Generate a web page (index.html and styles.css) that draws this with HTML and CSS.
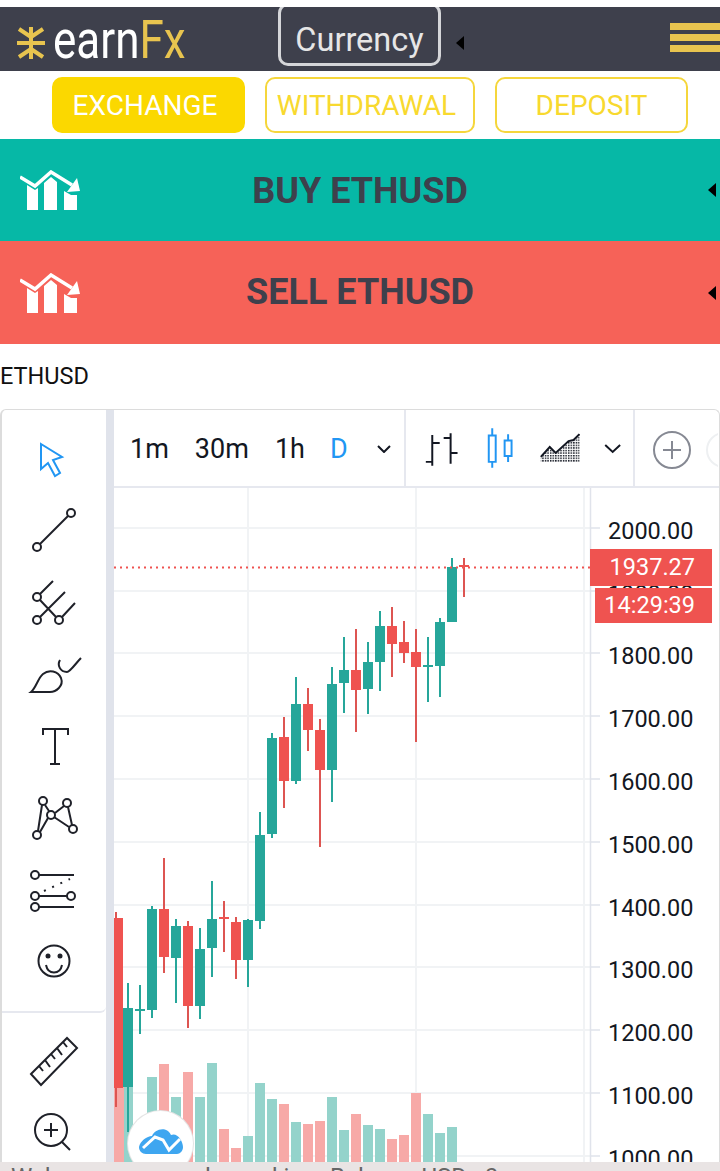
FILE: index.html
```html
<!DOCTYPE html>
<html lang="en">
<head>
    <meta charset="UTF-8">
    <meta name="viewport" content="width=device-width, initial-scale=1.0">
    <title>earnFx</title>
    <link rel="stylesheet" href="styles.css">
</head>
<body>

<header class="topbar">
    <div class="logo">
        <svg class="logo-mark" viewBox="17 27 28 32" width="28" height="32">
            <path d="M31 27V59M17 43H45M19 29L31 37L43 29M19 57L31 49L43 57"/>
        </svg>
        <span class="logo-text">earn<b>Fx</b></span>
    </div>
    <button class="currency">Currency</button>
    <span class="arrow-left arrow-currency"></span>
    <div class="burger"><i></i><i></i><i></i></div>
</header>

<nav class="tabs">
    <a class="tab tab-active">EXCHANGE</a>
    <a class="tab tab-wide">WITHDRAWAL</a>
    <a class="tab">DEPOSIT</a>
</nav>

<section class="trade trade-buy">
    <svg class="trade-icon" viewBox="0 0 60 40" width="60" height="40">
        <use href="#tradeGlyph"/>
    </svg>
    <h2>BUY ETHUSD</h2>
    <span class="arrow-left arrow-trade"></span>
</section>
<section class="trade trade-sell">
    <svg class="trade-icon" viewBox="0 0 60 40" width="60" height="40">
        <g id="tradeGlyph">
            <path class="glyph-fill" d="M7 15L15 20L18 18V40H7ZM24 13L31 7L37 12V40H24ZM44 21L51 25H57V40H44Z"/>
            <path class="glyph-line" d="M0 7L15 16L31 2L52 15"/>
            <path class="glyph-fill" d="M57 8L60 21L47 22Z"/>
        </g>
    </svg>
    <h2>SELL ETHUSD</h2>
    <span class="arrow-left arrow-trade"></span>
</section>

<div class="symbol">ETHUSD</div>

<div class="widget">
    <aside class="tools">
        <div class="tools-group">
            <svg class="tool tool-active" viewBox="2 423 104 72"><path d="M41 444L62 457L53 460L60 473L55 476L48 463L41 469Z"/></svg>
            <svg class="tool" viewBox="2 495 104 72"><circle cx="71" cy="513" r="4"/><circle cx="37" cy="547" r="4"/><path d="M68 516L40 544"/></svg>
            <svg class="tool" viewBox="2 567 104 72"><circle cx="37" cy="597" r="4"/><circle cx="37" cy="620" r="4"/><circle cx="59" cy="620" r="4"/><path d="M40 594L53 581M40 617L65 592M62 617L75 603M40 600L56 617"/></svg>
            <svg class="tool" viewBox="2 639 104 72"><path d="M31 692C36 688 38 678 43 674C49 669 58 671 61 678C64 686 56 692 50 692ZM60 660C57 665 60 672 67 672C70 672 76 663 81 658"/></svg>
            <svg class="tool" viewBox="2 711 104 72"><path d="M43 735V729H68V735M55 729V764M50 764H60"/></svg>
            <svg class="tool" viewBox="2 783 104 72"><circle cx="43" cy="801" r="4"/><circle cx="67" cy="803" r="4"/><circle cx="51" cy="815" r="4"/><circle cx="73" cy="829" r="4"/><circle cx="37" cy="835" r="4"/><path d="M42 805L38 831M45 805L49 811M55 813L64 806M68 807L72 825M54 817L69 827M48 818L40 832"/></svg>
            <svg class="tool" viewBox="2 855 104 72"><circle cx="35" cy="875" r="4"/><circle cx="35" cy="896" r="4"/><circle cx="71" cy="896" r="4"/><circle cx="35" cy="907" r="4"/><path d="M39 875H74M39 896H67M39 907H74"/><path class="tool-dots" d="M44 891L70 879"/></svg>
            <svg class="tool" viewBox="2 927 104 72"><circle cx="54" cy="961" r="15.5"/><circle class="tool-solid" cx="48" cy="956" r="2.5"/><circle class="tool-solid" cx="60" cy="956" r="2.5"/><path d="M46 965C48 975 60 975 62 965"/></svg>
        </div>
        <div class="tools-group tools-last">
            <svg class="tool" viewBox="2 1025 104 72"><path d="M31 1073L67 1037L77 1047L41 1084ZM39 1065L43 1070M45 1059L50 1066M51 1053L55 1058M57 1047L62 1054M63 1041L67 1046"/></svg>
            <svg class="tool" viewBox="2 1097 104 72"><circle cx="51" cy="1129" r="16"/><path d="M44 1129H58M51 1122V1136M62 1141L70 1149"/></svg>
        </div>
    </aside>

    <div class="gutter"></div>

    <div class="board">
        <div class="board-head">
            <div class="frames">
                <span>1m</span>
                <span>30m</span>
                <span>1h</span>
                <span class="frame-active">D</span>
                <svg class="chevron" viewBox="0 0 14 8" width="14" height="8"><path d="M1 1L7 7L13 1"/></svg>
            </div>
            <svg class="head-icons" viewBox="406 410 229 77" width="229" height="77">
                <defs>
                    <pattern id="dots" width="2.6" height="2.6" patternUnits="userSpaceOnUse">
                        <rect width="1.5" height="1.5" fill="#131722"/>
                    </pattern>
                </defs>
                <path class="ic-dark" d="M432.5 435V466M426 462H432.5M432.5 443H440M451 433V464M444 438H451M451 453H458"/>
                <path class="ic-blue" d="M489.5 435.500H496.500V462H489.500ZM493 428V435M493 462V468M505.500 440.500H512.500V456H505.500ZM509 434V440M509 456V462"/>
                <path class="ic-area" d="M542 457L551 447L557 453L570 441L575 440L581 434V462H542Z"/>
                <path class="ic-dark" d="M542 457L551 447L557 453L570 441L575 440L581 434"/>
                <path class="ic-dark" d="M607 445L614.500 452L622 445"/>
            </svg>
            <svg class="head-add" viewBox="636 410 83 77" width="83" height="77">
                <circle class="add-ring" cx="673" cy="450" r="18"/>
                <path class="add-plus" d="M664 450H682M673 441V459"/>
                <circle class="add-next" cx="725" cy="450" r="17"/>
            </svg>
        </div>

        <div class="chart">
            <svg class="plot" viewBox="114 488 606 674" width="606" height="674">
                <path class="grid" d="M114 528H590M114 591H590M114 653H590M114 716H590M114 779H590M114 842H590M114 905H590M114 967H590M114 1030H590M114 1093H590M114 1156H590M248 488V1162M416 488V1162M584 488V1162"/>
                <path class="axis" d="M590.500 488V1162M591 528H600M591 591H600M591 653H600M591 716H600M591 779H600M591 842H600M591 905H600M591 967H600M591 1030H600M591 1093H600M591 1156H600"/>

                <path class="vol vol-up" d="M128 1086V1162M152 1077V1162M176 1097V1162M200 1097V1162M212 1063V1162M248 1136V1162M260 1083V1162M272 1099V1162M296 1122V1162M332 1097V1162M344 1130V1162M368 1125V1162M380 1129V1162M428 1114V1162M440 1133V1162M452 1127V1162"/>
                <path class="vol vol-down" d="M119 1085V1162M164 1064V1162M188 1072V1162M224 1129V1162M236 1148V1162M284 1104V1162M308 1124V1162M320 1121V1162M356 1114V1162M392 1139V1162M404 1135V1162M416 1093V1162"/>

                <path class="wick wick-up" d="M128 983V1132M140 985V1034M152 906V1018M176 919V1003M200 928V1019M212 881V977M248 919V987M260 812V929M272 733V838M296 677V784M332 667V802M344 637V713M368 642V714M380 611V691M428 637V702M440 618V697M452 558V622"/>
                <path class="wick wick-down" d="M116 912V1107M164 858V973M188 921V1028M224 901V952M236 917V979M284 717V808M308 688V751M320 719V847M356 629V732M392 607V677M404 621V663M416 629V742M464 558V597"/>
                <path class="body body-up" d="M128 1008V1087M140 1009V1011M152 909V1010M176 926V958M200 949V1006M212 919V948M248 920V960M260 835V921M272 738V834M296 704V781M332 684V770M344 670V683M368 662V689M380 626V662M428 665V667M440 622V666M452 567V622"/>
                <path class="body body-down" d="M118 918V1088M164 909V957M188 926V1006M224 917V919M236 922V960M284 737V781M308 704V730M320 730V770M356 670V690M392 626V644M404 642V653M416 652V667M464 565V567"/>

                <path class="last-price" d="M114 567.500H590"/>

                <g class="prices">
                    <text x="608" y="539">2000.00</text>
                    <text x="608" y="602">1900.00</text>
                    <text x="608" y="664">1800.00</text>
                    <text x="608" y="727">1700.00</text>
                    <text x="608" y="790">1600.00</text>
                    <text x="608" y="853">1500.00</text>
                    <text x="608" y="916">1400.00</text>
                    <text x="608" y="978">1300.00</text>
                    <text x="608" y="1041">1200.00</text>
                    <text x="608" y="1104">1100.00</text>
                    <text x="608" y="1167">1000.00</text>
                </g>
            </svg>

            <div class="tag tag-price">1937.27</div>
            <div class="tag tag-time">14:29:39</div>

            <div class="badge">
                <svg viewBox="128 1111 65 65" width="65" height="65">
                    <path class="cloud" d="M139 1147C140 1141 147 1136 152 1136C154 1130 166 1125 171 1135C177 1132 183 1141 183 1147C183 1151 180 1154 177 1154H146C142 1154 139 1151 139 1147Z"/>
                    <path class="cloud-line" d="M143 1148L155 1137L163 1140L169 1150L180 1139"/>
                </svg>
            </div>
        </div>
    </div>
</div>

<footer class="status">
    <span class="status-left">Welcome, you are logged in</span>
    <span>Balance USD : 0</span>
</footer>

</body>
</html>
```

FILE: styles.css
```css
* {
    box-sizing: border-box;
}

body {
    display: flex;
    flex-direction: column;
    width: 720px;
    height: 1171px;
    margin: 0;
    padding-top: 7px;
    overflow: hidden;
    background-color: white;
    font-family: Roboto, "Liberation Sans", sans-serif;
}

/* barra superior */
.topbar {
    display: flex;
    flex: none;
    height: 64px;
    overflow: hidden;
    background-color: #3e404c;
}

.logo {
    display: flex;
    width: 278px;
    padding: 20px 0 0 17px;
}

.logo-mark {
    flex: none;
}

.logo-mark path {
    fill: none;
    stroke: #e8c44f;
    stroke-width: 4;
}

.logo-text {
    height: 36px;
    margin: -9px 0 0 8px;
    color: white;
    font-size: 44px;
    line-height: 36px;
    transform: scaleY(1.22);
    transform-origin: left top;
}

.logo-text b {
    color: #e8c44f;
    font-weight: 400;
}

.currency {
    flex: none;
    width: 163px;
    height: 63px;
    margin-top: -4px;
    padding: 11px 0 0;
    border: 3px solid #d5d6d9;
    border-radius: 10px;
    background: none;
    color: #e6e6e6;
    font-family: inherit;
    font-size: 32.500px;
    line-height: 38px;
}

.arrow-left {
    display: block;
    flex: none;
    width: 0;
    height: 0;
    border-top: 7px solid transparent;
    border-bottom: 7px solid transparent;
    border-right: 8px solid black;
}

.arrow-currency {
    margin: 29px 0 0 15px;
}

.burger {
    display: flex;
    flex-direction: column;
    gap: 4px;
    width: 50px;
    margin: 16px 0 0 auto;
}

.burger i {
    display: block;
    height: 7px;
    background-color: #e8c44f;
}

/* pestañas */
.tabs {
    display: flex;
    flex: none;
    gap: 20px;
    align-items: center;
    height: 68px;
    padding-left: 52px;
}

.tab {
    display: flex;
    align-items: center;
    justify-content: center;
    width: 193px;
    height: 56px;
    border: 2px solid #f5d63c;
    border-radius: 10px;
    color: #f8d92f;
    font-size: 28px;
}

.tab-wide {
    width: 210px;
    padding-right: 7px;
}

.tab-active {
    padding-right: 7px;
    border-color: #fbd800;
    background-color: #fbd800;
    color: white;
}

/* comprar y vender */
.trade {
    display: flex;
    flex: none;
    align-items: center;
    position: relative;
    height: 102px;
    padding-left: 20px;
}

.trade-buy {
    background-color: #06b8a6;
}

.trade-buy h2 {
    margin-top: 1px;
}

.trade-sell {
    height: 103px;
    background-color: #f66258;
}

.trade h2 {
    position: absolute;
    left: 0;
    right: 0;
    color: #3e404c;
    font-size: 36px;
    font-weight: 700;
    text-align: center;
}

.trade h2 {
    margin-bottom: 0;
}

.trade-sell h2 {
    margin-top: -2px;
}

.arrow-trade {
    margin-left: auto;
    margin-right: 4px;
}

.glyph-fill {
    fill: white;
}

.glyph-line {
    fill: none;
    stroke: white;
    stroke-width: 3.500;
}

.symbol {
    flex: none;
    height: 65px;
    padding-top: 18px;
    color: #111;
    font-size: 23.500px;
    line-height: 28px;
}

/* widget del gráfico */
.widget {
    display: flex;
    flex: 1;
    min-height: 0;
    overflow: hidden;
    border: 1px solid #dcdcdc;
    border-left-width: 2px;
    border-bottom: none;
    border-radius: 6px 6px 0 0;
}

.tools {
    flex: none;
    width: 104px;
}

.tools-group {
    display: flex;
    flex-direction: column;
    padding: 13px 0 12px;
    border-bottom: 2px solid #e6e8ef;
    border-radius: 0 0 6px 0;
}

.tools-last {
    border-bottom: none;
}

.tool {
    display: block;
    flex: none;
    width: 104px;
    height: 72px;
    fill: none;
    stroke: #1f2129;
    stroke-width: 2;
}

.tool-active {
    stroke: #2196f3;
}

.tool-solid {
    fill: #1f2129;
    stroke: none;
}

.tool-dots {
    stroke-dasharray: 2 7;
}

.gutter {
    flex: none;
    width: 8px;
    background-color: #e0e3eb;
}

.board {
    display: flex;
    flex: 1;
    flex-direction: column;
    min-width: 0;
}

.board-head {
    display: flex;
    flex: none;
    height: 78px;
    border-bottom: 2px solid #e6e8ef;
}

.frames {
    display: flex;
    flex: none;
    gap: 26px;
    align-items: center;
    width: 292px;
    padding: 2px 0 0 16px;
    border-right: 2px solid #e6e8ef;
    color: #131722;
    font-size: 27px;
}

.frame-active {
    margin-left: -1px;
    color: #2196f3;
}

.chevron {
    margin-left: 3px;
    fill: none;
    stroke: #131722;
    stroke-width: 2;
}

.head-icons {
    flex: none;
    border-right: 2px solid #e6e8ef;
}

.head-add {
    flex: none;
}

.ic-dark {
    fill: none;
    stroke: #131722;
    stroke-width: 2;
}

.ic-blue {
    fill: none;
    stroke: #2196f3;
    stroke-width: 2;
}

.ic-area {
    fill: url(#dots);
}

.add-ring {
    fill: none;
    stroke: #868993;
    stroke-width: 2;
}

.add-plus {
    stroke: #868993;
    stroke-width: 2;
}

.add-next {
    fill: none;
    stroke: #eef0f2;
    stroke-width: 2;
}

.chart {
    position: relative;
    flex: 1;
    min-height: 0;
    overflow: hidden;
}

.plot {
    display: block;
}

.grid {
    fill: none;
    stroke: #f1f3f5;
    stroke-width: 2;
}

.axis {
    fill: none;
    stroke: #e0e3eb;
    stroke-width: 1.500;
}

.vol {
    stroke-width: 10;
}

.vol-up {
    stroke: #94d3cb;
}

.vol-down {
    stroke: #f7a9a7;
}

.wick {
    stroke-width: 2;
}

.wick-up,
.body-up {
    stroke: #26a69a;
}

.wick-down {
    stroke: #dd5552;
}

.body {
    stroke-width: 10;
}

.body-down {
    stroke: #ef5350;
}

.last-price {
    stroke: #ef5350;
    stroke-width: 2;
    stroke-dasharray: 2 4;
}

.prices text {
    fill: #131722;
    font-size: 23.500px;
}

/* etiquetas de precio */
.tag {
    position: absolute;
    padding-right: 17px;
    background-color: #ef5350;
    color: white;
    font-size: 23.500px;
    text-align: right;
}

.tag-price {
    left: 476px;
    top: 61px;
    width: 122px;
    height: 37px;
    line-height: 37px;
}

.tag-time {
    left: 481px;
    top: 100px;
    width: 117px;
    height: 35px;
    line-height: 35px;
}

.badge {
    position: absolute;
    left: 14px;
    top: 623px;
    width: 65px;
    height: 65px;
    border-radius: 50%;
    background-color: white;
    box-shadow: 0 0 0 1px #e4e4e4;
}

.badge svg {
    display: block;
}

.cloud {
    fill: #3ea6f0;
}

.cloud-line {
    fill: none;
    stroke: white;
    stroke-width: 3;
}

/* barra de estado, cortada por la pantalla */
.status {
    display: flex;
    flex: none;
    height: 9px;
    padding: 3px 0 0 11px;
    overflow: hidden;
    background-color: #e9e4e4;
    color: #666;
    font-size: 24px;
    line-height: 24px;
}

.status-left {
    width: 319px;
}
```
